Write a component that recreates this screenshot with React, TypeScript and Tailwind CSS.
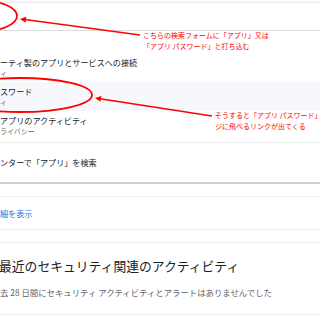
import React from "react";

const font = { fontFamily: '"Noto Sans CJK JP", "Noto Sans", sans-serif' };

function Row({ main, sub, highlight, tall }: { main: string; sub: string; highlight?: boolean; tall?: boolean }) {
  return (
    <div className={`flex flex-col pt-[4px] ${tall ? "h-[31px]" : "h-[29px]"} ${highlight ? "bg-[#f6f8fc]" : "bg-white"}`}>
      <div className="text-[8.1px] leading-[11px] text-[#202124] whitespace-nowrap">{main}</div>
      <div className="text-[7px] leading-[10px] text-[#5f6368] whitespace-nowrap">{sub}</div>
    </div>
  );
}

export default function App() {
  return (
    <div className="relative w-[320px] h-[320px] overflow-hidden bg-white" style={font}>
      <div className="h-[3px] bg-[#f8f9fa] border-b border-[#e8eaed]" />
      <div className="h-[28px] border-b border-[#dadce0] bg-white" />
      <div className="h-[22px]" />
      <Row main="ーティ製のアプリとサービスへの接続" sub="ィ" />
      <Row main="スワード" sub="ィ" highlight />
      <Row main="アプリのアクティビティ" sub="ライバシー" tall />
      <div className="h-[40px] border-t border-[#eeeeee] flex items-center">
        <span className="text-[8.1px] leading-[11px] text-[#202124] whitespace-nowrap">ンターで「アプリ」を検索</span>
      </div>
      <div className="h-[2px] bg-[#cfcfcf]" />
      <div className="h-[12px] bg-white" />
      <div className="h-[33px] border-t border-[#eeeeee] flex items-center">
        <span className="text-[8.1px] leading-[11px] text-[#1a73e8] whitespace-nowrap">細を表示</span>
      </div>
      <div className="h-[13px] border-t border-[#eeeeee] bg-white" />
      <div className="h-[73px] border-t border-[#eeeeee] border-b flex flex-col">
        <div className="pt-[14px] ml-[-1px] text-[12.8px] leading-[18px] text-[#202124] whitespace-nowrap">最近のセキュリティ関連のアクティビティ</div>
        <div className="pt-[11px] text-[8.4px] leading-[12px] text-[#5f6368] whitespace-nowrap">去 28 日間にセキュリティ アクティビティとアラートはありませんでした</div>
      </div>

      <svg className="absolute left-0 top-0" width="320" height="320" viewBox="0 0 320 320">
        <ellipse cx="-20" cy="16" rx="37" ry="15.5" fill="none" stroke="#ff0000" strokeWidth="1.8" />
        <ellipse cx="20" cy="95" rx="72" ry="17" fill="none" stroke="#ff0000" strokeWidth="1.8" />
        <line x1="140" y1="35" x2="25" y2="19.6" stroke="#ff0000" strokeWidth="1.5" />
        <polygon points="20,19 25.55,22.76 26.35,16.82" fill="#ff0000" />
        <line x1="212" y1="116" x2="100" y2="98.8" stroke="#ff0000" strokeWidth="1.5" />
        <polygon points="95,98 100.47,101.87 101.39,95.95" fill="#ff0000" />
      </svg>

      <div className="absolute left-[143px] top-[30px] text-[7px] leading-[10.5px] text-[#ff0000] whitespace-nowrap">
        <div>こちらの検索フォームに「アプリ」又は</div>
        <div>「アプリ パスワード」と打ち込む</div>
      </div>
      <div className="absolute left-[215px] top-[110px] text-[7px] leading-[10.5px] text-[#ff0000] whitespace-nowrap">
        <div>そうすると「アプリ パスワード」</div>
        <div>ジに飛べるリンクが出てくる</div>
      </div>
    </div>
  );
}
